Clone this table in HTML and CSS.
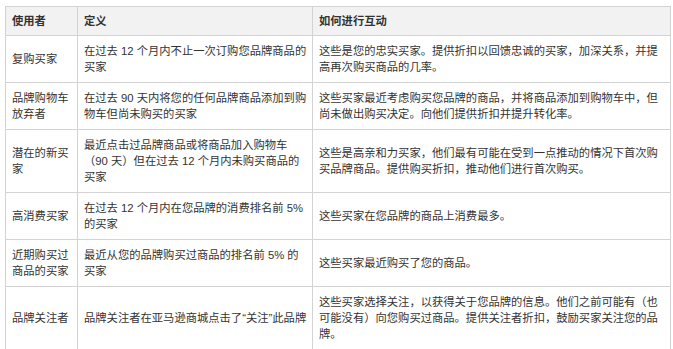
FILE: index.html
```html
<!DOCTYPE html>
<html lang="zh-CN">
<head>
<meta charset="utf-8">
<title>买家类型</title>
<link rel="stylesheet" href="styles.css">
</head>
<body>
<div class="wrap">
<table class="buyers">
  <colgroup>
    <col class="c1">
    <col class="c2">
    <col class="c3">
  </colgroup>
  <thead>
    <tr>
      <th>使用者</th>
      <th>定义</th>
      <th>如何进行互动</th>
    </tr>
  </thead>
  <tbody>
    <tr>
      <td>复购买家</td>
      <td class="def">在过去 12 个月内不止一次订购您品牌商品的买家</td>
      <td>这些是您的忠实买家。提供折扣以回馈忠诚的买家，加深关系，并提高再次购买商品的几率。</td>
    </tr>
    <tr>
      <td>品牌购物车放弃者</td>
      <td class="def">在过去 90 天内将您的任何品牌商品添加到购物车但尚未购买的买家</td>
      <td>这些买家最近考虑购买您品牌的商品，并将商品添加到购物车中，但尚未做出购买决定。向他们提供折扣并提升转化率。</td>
    </tr>
    <tr>
      <td>潜在的新买家</td>
      <td class="def">最近点击过品牌商品或将商品加入购物车（90 天）但在过去 12 个月内未购买商品的买家</td>
      <td>这些是高亲和力买家，他们最有可能在受到一点推动的情况下首次购买品牌商品。提供购买折扣，推动他们进行首次购买。</td>
    </tr>
    <tr>
      <td>高消费买家</td>
      <td class="def">在过去 12 个月内在您品牌的消费排名前 5% 的买家</td>
      <td>这些买家在您品牌的商品上消费最多。</td>
    </tr>
    <tr>
      <td>近期购买过商品的买家</td>
      <td class="def">最近从您的品牌购买过商品的排名前 5% 的买家</td>
      <td>这些买家最近购买了您的商品。</td>
    </tr>
    <tr>
      <td>品牌关注者</td>
      <td class="def">品牌关注者在亚马逊商城点击了<span class="q">“</span>关注<span class="q">”</span>此品牌</td>
      <td>这些买家选择关注，以获得关于您品牌的信息。他们之前可能有（也可能没有）向您购买过商品。提供关注者折扣，鼓励买家关注您的品牌。</td>
    </tr>
  </tbody>
</table>
</div>
</body>
</html>
```

FILE: styles.css
```css
html, body {
  margin: 0;
  padding: 0;
  background: #ffffff;
}

.wrap {
  padding: 6px 0 0 5px;
}

.buyers {
  width: 665px;
  table-layout: fixed;
  border-collapse: collapse;
  font-family: "Liberation Sans", "Noto Sans CJK SC", sans-serif;
  font-size: 11.3px;
  line-height: 16px;
  color: #333333;
}

.c1 { width: 72px; }
.c2 { width: 235px; }
.c3 { width: 358px; }

.buyers th,
.buyers td {
  border: 1px solid #d3d3d3;
  text-align: left;
  vertical-align: middle;
  padding: 7px 2px 7px 6px;
}

.buyers td.def {
  padding-right: 4px;
}

.buyers th {
  background: #f2f2f2;
  font-weight: 700;
  padding-top: 6px;
  padding-bottom: 6px;
}

.q {
  font-family: "Liberation Sans", sans-serif;
}
```
